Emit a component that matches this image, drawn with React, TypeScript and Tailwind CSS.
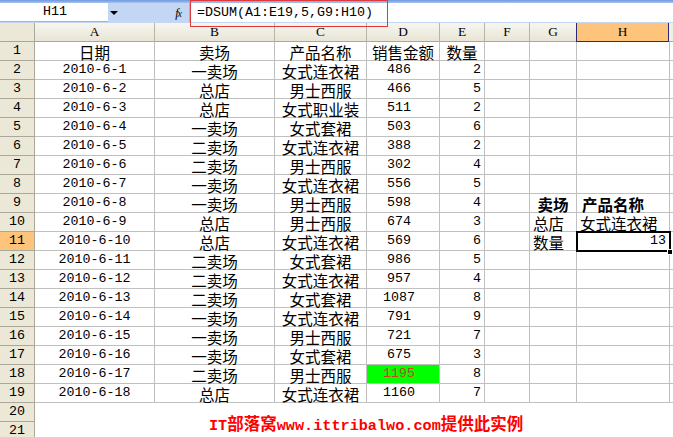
import React from "react";

type Cell = { t?: string; a?: "c" | "l" | "r" | "d" | "l5"; b?: boolean; cls?: string };

const COLW = ["w-[120px]", "w-[120px]", "w-[92px]", "w-[73px]", "w-[45px]", "w-[45px]", "w-[47px]", "w-[93px]"];
const LETTERS = ["A", "B", "C", "D", "E", "F", "G", "H"];

const DATA: [string, string, string, string, string][] = [
  ["2010-6-1", "一卖场", "女式连衣裙", "486", "2"],
  ["2010-6-2", "总店", "男士西服", "466", "5"],
  ["2010-6-3", "总店", "女式职业装", "511", "2"],
  ["2010-6-4", "一卖场", "女式套裙", "503", "6"],
  ["2010-6-5", "二卖场", "女式连衣裙", "388", "2"],
  ["2010-6-6", "二卖场", "男士西服", "302", "4"],
  ["2010-6-7", "一卖场", "女式连衣裙", "556", "5"],
  ["2010-6-8", "一卖场", "男士西服", "598", "4"],
  ["2010-6-9", "总店", "男士西服", "674", "3"],
  ["2010-6-10", "总店", "女式连衣裙", "569", "6"],
  ["2010-6-11", "二卖场", "女式套裙", "986", "5"],
  ["2010-6-12", "二卖场", "女式连衣裙", "957", "4"],
  ["2010-6-13", "二卖场", "女式套裙", "1087", "8"],
  ["2010-6-14", "一卖场", "女式连衣裙", "791", "9"],
  ["2010-6-15", "一卖场", "男士西服", "721", "7"],
  ["2010-6-16", "一卖场", "女式套裙", "675", "3"],
  ["2010-6-17", "二卖场", "男士西服", "1195", "8"],
  ["2010-6-18", "总店", "女式连衣裙", "1160", "7"],
];

function buildRows(): Cell[][] {
  const rows: Cell[][] = [];
  rows.push([
    { t: "日期", a: "c" },
    { t: "卖场", a: "c" },
    { t: "产品名称", a: "c" },
    { t: "销售金额", a: "c" },
    { t: "数量", a: "c" },
    {},
    {},
    {},
  ]);
  DATA.forEach((d) => {
    rows.push([
      { t: d[0], a: "c" },
      { t: d[1], a: "c" },
      { t: d[2], a: "c" },
      { t: d[3], a: "d" },
      { t: d[4], a: "r" },
      {},
      {},
      {},
    ]);
  });
  rows[8][6] = { t: "卖场", a: "c", b: true };
  rows[8][7] = { t: "产品名称", a: "l5", b: true };
  rows[9][6] = { t: "总店", a: "l" };
  rows[9][7] = { t: "女式连衣裙", a: "l" };
  rows[10][6] = { t: "数量", a: "l" };
  rows[10][7] = { t: "13", a: "r" };
  rows[17][3] = { ...rows[17][3], cls: "bg-[#00ff00] text-[#d8401c]" };
  return rows;
}

const ROWS = buildRows();

const isCJK = (s: string) => /[\u4e00-\u9fff]/.test(s);

function alignCls(a?: Cell["a"]) {
  switch (a) {
    case "c":
      return "justify-center";
    case "l":
      return "justify-start pl-[3px]";
    case "l5":
      return "justify-start pl-[5px]";
    case "r":
      return "justify-end pr-[3px]";
    case "d":
      return "justify-center pr-[8px]";
    default:
      return "";
  }
}

function CellText({ t, b }: { t: string; b?: boolean }) {
  if (isCJK(t)) {
    return (
      <span
        className={
          "text-[15.5px] leading-[16px] translate-y-[1px] font-['Noto_Sans_CJK_SC',sans-serif] whitespace-nowrap " +
          (b ? "font-bold" : "font-normal")
        }
      >
        {t}
      </span>
    );
  }
  return (
    <span className="text-[13.33px] leading-[16px] font-['Liberation_Mono',monospace] whitespace-nowrap">
      {t}
    </span>
  );
}

export default function App() {
  return (
    <div className="relative w-[673px] h-[437px] overflow-hidden bg-white text-black select-none">
      {/* Formula bar */}
      <div className="h-[23px] flex flex-col bg-[#c3d6f4]">
        <div className="h-[3px] bg-gradient-to-b from-[#6f98dc] to-[#a8c3ee]"></div>
        <div className="flex h-[19px]">
          <div className="w-[108px] h-[19px] bg-white flex items-center justify-center border-b border-[#9fb6dc]">
            <span className="text-[13.33px] font-['Liberation_Mono',monospace] pl-[2px]">H11</span>
          </div>
          <div className="w-[12px] h-[19px] bg-[#c3d6f4] flex items-center justify-center">
            <div className="w-0 h-0 border-l-[4px] border-r-[4px] border-t-[4px] border-l-transparent border-r-transparent border-t-black"></div>
          </div>
          <div className="w-[70px] h-[19px] flex items-center justify-end pr-[8px] border-r border-[#9fb6dc]">
            <span className="italic text-[12px] font-['Liberation_Serif',serif] tracking-[-1px]">
              f<span className="text-[10px]">x</span>
            </span>
          </div>
          <div className="flex-1 h-[19px] bg-white flex items-center pl-[7px]">
            <span className="text-[13.33px] font-['Liberation_Mono',monospace] whitespace-nowrap">
              =DSUM(A1:E19,5,G9:H10)
            </span>
          </div>
        </div>
        <div className="h-[1px]"></div>
      </div>

      {/* Column header row */}
      <div className="flex h-[19px] bg-[#f1efe2]">
        <div className="w-[35px] h-[19px] bg-[#ebe8d7] border-r border-b border-[#aca899]"></div>
        {LETTERS.map((l, i) => (
          <div
            key={l}
            className={
              COLW[i] +
              " h-[19px] flex items-center justify-center border-b " +
              (l === "H"
                ? "bg-[#ffc47c] border-r border-l border-[#2a2a7a] -ml-[1px]"
                : "border-r border-[#b8b5a5] bg-gradient-to-b from-[#f7f6ef] to-[#e8e5d6] border-b-[#aca899]")
            }
          >
            <span className="text-[13.33px] font-['Liberation_Serif',serif]">{l}</span>
          </div>
        ))}
        <div className="flex-1 h-[19px] border-b border-[#aca899] bg-[#f1efe2]"></div>
      </div>

      {/* Data rows */}
      {ROWS.map((row, ri) => (
        <div key={ri} className="flex h-[19px]">
          <div
            className={
              "w-[35px] h-[19px] flex items-end justify-center pb-[1px] border-r border-b border-[#aca899] " +
              (ri === 10 ? "bg-[#ffc47c]" : "bg-[#ebe8d7]")
            }
          >
            <span className="text-[13.33px] leading-[16px] font-['Liberation_Mono',monospace]">{ri + 1}</span>
          </div>
          {row.map((c, ci) => (
            <div
              key={ci}
              className={
                COLW[ci] +
                " h-[19px] flex items-end pb-[1px] border-r border-b border-[#c0c0c0] " +
                alignCls(c.a) +
                " " +
                (c.cls ?? "")
              }
            >
              {c.t ? <CellText t={c.t} b={c.b} /> : null}
            </div>
          ))}
          <div className="flex-1 h-[19px] border-b border-[#c0c0c0]"></div>
        </div>
      ))}

      {/* Rows 20-21 */}
      {[20, 21].map((n) => (
        <div key={n} className="flex h-[19px]">
          <div className="w-[35px] h-[19px] flex items-end justify-center pb-[1px] border-r border-b border-[#aca899] bg-[#ebe8d7]">
            <span className="text-[13.33px] leading-[16px] font-['Liberation_Mono',monospace]">{n}</span>
          </div>
          <div className="flex-1 bg-white"></div>
        </div>
      ))}

      {/* Annotation box around formula */}
      <div className="absolute left-[190px] top-0 w-[198px] h-[27px] border border-[#e0393a]"></div>

      {/* Active cell H11 selection */}
      <div className="absolute left-[576px] top-[231px] w-[95px] h-[21px] border-2 border-black"></div>
      <div className="absolute left-[667px] top-[249px] w-[6px] h-[6px] bg-black border border-white"></div>

      {/* Watermark text */}
      <div className="absolute left-[209px] top-[414px] flex items-baseline text-[#ff0000] font-bold whitespace-nowrap">
        <span className="text-[15.2px] font-['Liberation_Mono',monospace]">IT</span>
        <span className="text-[16.5px] font-['Noto_Sans_CJK_SC',sans-serif] leading-[18px]">部落窝</span>
        <span className="text-[15.2px] font-['Liberation_Mono',monospace]">www.ittribalwo.com</span>
        <span className="text-[16.5px] font-['Noto_Sans_CJK_SC',sans-serif] leading-[18px]">提供此实例</span>
      </div>
    </div>
  );
}
